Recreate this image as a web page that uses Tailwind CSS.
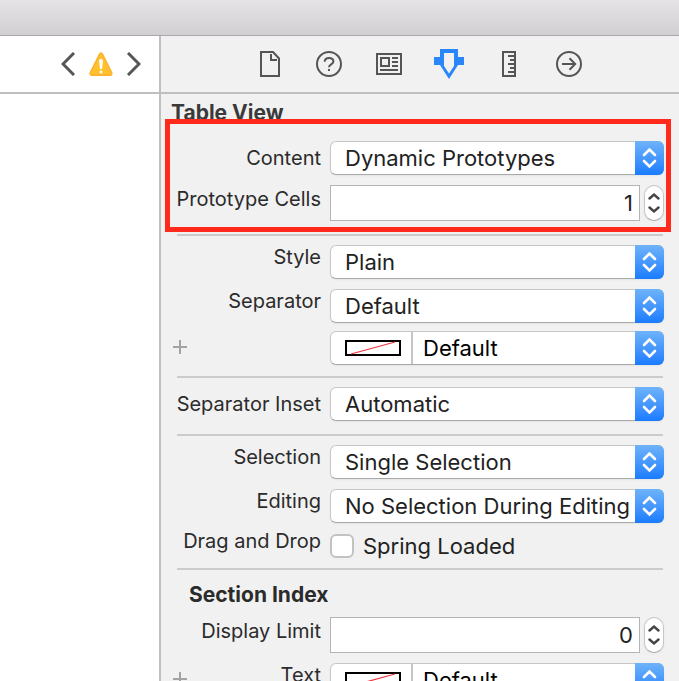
<!DOCTYPE html>
<html lang="en">
<head>
<meta charset="utf-8">
<meta name="viewport" content="width=device-width, initial-scale=1">
<title>Attributes Inspector</title>
<script src="https://cdn.jsdelivr.net/npm/@tailwindcss/browser@4"></script>
</head>
<body class="flex h-screen flex-col overflow-hidden bg-white font-['Inter','Liberation_Sans',sans-serif] text-[#2b2b2b]">

<!-- Shared symbols -->
<svg class="hidden" aria-hidden="true">
  <symbol id="popup-cap" viewBox="0 0 29 34">
    <path d="M9 14 14.5 8.5 20 14M9 20 14.5 25.5 20 20" fill="none" stroke="#fff" stroke-width="2.6" stroke-linecap="round"/>
  </symbol>
  <symbol id="plus" viewBox="0 0 14 14"><path d="M7 0V14M0 7H14" fill="none" stroke="#a3a3a3" stroke-width="2"/></symbol>
  <symbol id="up" viewBox="0 0 12 8"><path d="M1.5 6.5 6 2.5 10.5 6.5" fill="none" stroke="#444" stroke-width="2.4" stroke-linecap="round"/></symbol>
  <symbol id="down" viewBox="0 0 12 8"><path d="M1.5 1.5 6 5.5 10.5 1.5" fill="none" stroke="#444" stroke-width="2.4" stroke-linecap="round"/></symbol>
  <symbol id="no-color" viewBox="0 0 56 16"><rect x="1" y="1" width="54" height="14" fill="#fff" stroke="#000" stroke-width="2"/><path d="M6 14 50 2" stroke="#f5333f" stroke-width="1.2"/></symbol>
</svg>

<header class="h-9 shrink-0 border-b border-[#aaa8ab] bg-linear-to-b from-[#e5e3e6] to-[#d1cfd2]"></header>

<div class="flex min-h-0 flex-1">
  <main class="w-[161px] shrink-0 border-r-2 border-[#bfbfbf] bg-white">
    <nav class="flex h-[58px] items-center justify-end gap-3.5 border-b-2 border-[#bfbfbf] pr-[18px]" aria-label="Issues">
      <button type="button" aria-label="Previous issue"><svg class="h-6 w-3.5" viewBox="0 0 14 24"><path d="M13 1 2 12 13 23" fill="none" stroke="#555" stroke-width="3"/></svg></button>
      <button type="button" aria-label="Show warnings"><svg class="size-6" viewBox="0 0 24 24"><path d="M10.8 1.6Q12 .2 13.2 1.6L22.8 20.8Q23.2 23.2 21.2 23.3H2.8Q.8 23.200 1.2 20.800Z" fill="#ffc02e" stroke="#ffb02e" stroke-width="1.4" stroke-linejoin="round"/><path d="M10 8.5Q10 7 12 7T14 8.5L13 17H11Z" fill="#fff"/><circle cx="12" cy="20" r="1.5" fill="#fff"/></svg></button>
      <button type="button" aria-label="Next issue"><svg class="h-6 w-3.5" viewBox="0 0 14 24"><path d="M1 1 12 12 1 23" fill="none" stroke="#555" stroke-width="3"/></svg></button>
    </nav>
  </main>

  <aside class="min-w-0 flex-1 overflow-hidden bg-[#f1f1f1]">
    <nav class="flex h-[58px] items-center justify-center border-b-2 border-[#bfbfbf] text-[#555]" aria-label="Inspectors">
      <button type="button" class="flex w-15 justify-center" aria-label="File"><svg class="size-[30px]" viewBox="0 0 30 30" fill="none" stroke="currentColor" stroke-width="2"><path d="M6 3H18L24 9.5V27H6ZM16 5V11H22"/></svg></button>
      <button type="button" class="flex w-15 justify-center" aria-label="Quick Help"><svg class="size-[30px]" viewBox="0 0 30 30" fill="none" stroke="currentColor" stroke-width="2"><circle cx="14" cy="15" r="12"/><path d="M9.7 12.8C9.7 10.3 11.5 9 14 9S18.4 10.4 18.4 12.5C18.4 15.5 14 15.3 14 18.2M14 20V22"/></svg></button>
      <button type="button" class="flex w-15 justify-center" aria-label="Identity"><svg class="size-[30px]" viewBox="0 0 30 30" fill="none" stroke="currentColor" stroke-width="2"><path d="M2 5H26V25H2ZM6 9H14V17H6ZM17 9H23M17 13H23M17 17H23M5 21H23"/></svg></button>
      <button type="button" class="flex w-15 justify-center text-[#2a87fb]" aria-label="Attributes" aria-pressed="true"><svg class="size-[30px] overflow-visible" viewBox="0 0 30 30"><path fill="currentColor" fill-rule="evenodd" d="M5 0H23V8H29V16H23L14 30 5 16H-1V8H5ZM9 4V17L14 24.5 19 17V4Z"/></svg></button>
      <button type="button" class="flex w-15 justify-center" aria-label="Size"><svg class="size-[30px]" viewBox="0 0 30 30" fill="none" stroke="currentColor" stroke-width="2"><path d="M8 3H20V27H8ZM13 7H20M15 11H20M13 15H20M15 19H20M13 23H20"/></svg></button>
      <button type="button" class="flex w-15 justify-center" aria-label="Connections"><svg class="size-[30px]" viewBox="0 0 30 30" fill="none" stroke="currentColor" stroke-width="2"><circle cx="14" cy="15" r="12"/><path d="M7 15H20M14.5 9.3 20.2 15 14.5 20.7"/></svg></button>
    </nav>

    <form class="flex flex-col">
      <h2 class="mt-[7px] pl-2.5 text-[21px] leading-6 font-bold text-[#3a3a3a]">Table View</h2>

      <div class="relative mt-4 flex flex-col gap-2.5">
        <div class="grid grid-cols-[160px_minmax(0,1fr)] gap-[9px] pr-[15px]">
          <label for="content" class="self-center text-right text-xl leading-6">Content</label>
          <div class="relative h-[34px]">
            <select id="content" class="block size-full appearance-none rounded-md border border-[#c6c6c6] border-b-[#a9a9a9] bg-white pr-[29px] pl-3.5 text-[22px] leading-8 text-[#222] shadow-xs"><option>Dynamic Prototypes</option><option>Static Cells</option></select>
            <svg class="pointer-events-none absolute top-0 right-0 h-[34px] w-[29px] rounded-r-md bg-linear-to-b from-[#6eb3f9] to-[#187bfe]"><use href="#popup-cap"/></svg>
          </div>
        </div>
        <div class="grid grid-cols-[160px_minmax(0,1fr)] gap-[9px] pr-[15px]">
          <label for="cells" class="mt-0.5 text-right text-xl leading-6">Prototype Cells</label>
          <div class="flex h-9 gap-1">
            <input id="cells" value="1" inputmode="numeric" class="min-w-0 flex-1 border border-[#b4b4b4] bg-white pr-1.5 text-right text-[22px] leading-8 text-[#222]">
            <div class="flex w-5 flex-col items-center justify-between rounded-full border border-[#c6c6c6] border-b-[#a9a9a9] bg-white py-1.5 shadow-xs">
              <button type="button" aria-label="Increase prototype cells"><svg class="block h-2 w-3"><use href="#up"/></svg></button>
              <button type="button" aria-label="Decrease prototype cells"><svg class="block h-2 w-3"><use href="#down"/></svg></button>
            </div>
          </div>
        </div>
        <div class="pointer-events-none absolute -top-[22px] right-2 -bottom-[11px] left-1 z-10 border-5 border-[#ff2a1c]"></div>
      </div>

      <hr class="mx-4 mt-[13px] border-t-2 border-[#cbcbcb]">

      <div class="mt-[9px] grid grid-cols-[160px_minmax(0,1fr)] gap-[9px] pr-[15px]">
        <label for="style" class="text-right text-xl leading-6">Style</label>
        <div class="relative h-[34px]">
          <select id="style" class="block size-full appearance-none rounded-md border border-[#c6c6c6] border-b-[#a9a9a9] bg-white pr-[29px] pl-3.5 text-[22px] leading-8 text-[#222] shadow-xs"><option>Plain</option><option>Grouped</option></select>
          <svg class="pointer-events-none absolute top-0 right-0 h-[34px] w-[29px] rounded-r-md bg-linear-to-b from-[#6eb3f9] to-[#187bfe]"><use href="#popup-cap"/></svg>
        </div>
      </div>
      <div class="mt-2.5 grid grid-cols-[160px_minmax(0,1fr)] gap-[9px] pr-[15px]">
        <label for="separator" class="text-right text-xl leading-6">Separator</label>
        <div class="relative h-[34px]">
          <select id="separator" class="block size-full appearance-none rounded-md border border-[#c6c6c6] border-b-[#a9a9a9] bg-white pr-[29px] pl-3.5 text-[22px] leading-8 text-[#222] shadow-xs"><option>Default</option><option>Single Line</option><option>None</option></select>
          <svg class="pointer-events-none absolute top-0 right-0 h-[34px] w-[29px] rounded-r-md bg-linear-to-b from-[#6eb3f9] to-[#187bfe]"><use href="#popup-cap"/></svg>
        </div>
      </div>
      <div class="mt-2 grid grid-cols-[160px_minmax(0,1fr)] gap-[9px] pr-[15px]">
        <div class="flex items-center pb-0.5 pl-3">
          <button type="button" aria-label="Add separator color variation"><svg class="size-3.5"><use href="#plus"/></svg></button>
        </div>
        <div class="relative flex h-[34px] rounded-md border border-[#c6c6c6] border-b-[#a9a9a9] bg-white shadow-xs">
          <button type="button" aria-label="Choose separator color" class="flex w-[82px] shrink-0 items-center border-r-2 border-[#c6c6c6] pl-3.5"><svg class="h-4 w-14"><use href="#no-color"/></svg></button>
          <select aria-label="Separator color" class="min-w-0 flex-1 appearance-none bg-transparent pr-[29px] pl-2.5 text-[22px] leading-8 text-black"><option>Default</option></select>
          <svg class="pointer-events-none absolute -top-px -right-px h-[34px] w-[29px] rounded-r-md bg-linear-to-b from-[#6eb3f9] to-[#187bfe]"><use href="#popup-cap"/></svg>
        </div>
      </div>

      <hr class="mx-4 mt-[11px] border-t-2 border-[#cbcbcb]">

      <div class="mt-[9px] grid grid-cols-[160px_minmax(0,1fr)] gap-[9px] pr-[15px]">
        <label for="inset" class="self-center text-right text-xl leading-6">Separator Inset</label>
        <div class="relative h-[34px]">
          <select id="inset" class="block size-full appearance-none rounded-md border border-[#c6c6c6] border-b-[#a9a9a9] bg-white pr-[29px] pl-3.5 text-[22px] leading-8 text-[#222] shadow-xs"><option>Automatic</option><option>Custom</option></select>
          <svg class="pointer-events-none absolute top-0 right-0 h-[34px] w-[29px] rounded-r-md bg-linear-to-b from-[#6eb3f9] to-[#187bfe]"><use href="#popup-cap"/></svg>
        </div>
      </div>

      <hr class="mx-4 mt-[13px] border-t-2 border-[#cbcbcb]">

      <div class="mt-[9px] grid grid-cols-[160px_minmax(0,1fr)] gap-[9px] pr-[15px]">
        <label for="selection" class="text-right text-xl leading-6">Selection</label>
        <div class="relative h-[34px]">
          <select id="selection" class="block size-full appearance-none rounded-md border border-[#c6c6c6] border-b-[#a9a9a9] bg-white pr-[29px] pl-3.5 text-[22px] leading-8 text-[#222] shadow-xs"><option>Single Selection</option><option>Multiple Selection</option></select>
          <svg class="pointer-events-none absolute top-0 right-0 h-[34px] w-[29px] rounded-r-md bg-linear-to-b from-[#6eb3f9] to-[#187bfe]"><use href="#popup-cap"/></svg>
        </div>
      </div>
      <div class="mt-2.5 grid grid-cols-[160px_minmax(0,1fr)] gap-[9px] pr-[15px]">
        <label for="editing" class="text-right text-xl leading-6">Editing</label>
        <div class="relative h-[34px]">
          <select id="editing" class="block size-full appearance-none rounded-md border border-[#c6c6c6] border-b-[#a9a9a9] bg-white pr-[29px] pl-3.5 text-[22px] leading-8 text-[#222] shadow-xs"><option>No Selection During Editing</option></select>
          <svg class="pointer-events-none absolute top-0 right-0 h-[34px] w-[29px] rounded-r-md bg-linear-to-b from-[#6eb3f9] to-[#187bfe]"><use href="#popup-cap"/></svg>
        </div>
      </div>
      <div class="mt-1.5 grid grid-cols-[160px_minmax(0,1fr)] gap-[9px] pr-[15px]">
        <span class="text-right text-xl leading-6">Drag and Drop</span>
        <label class="flex h-[34px] items-center gap-[9px] text-[22px] leading-8 text-[#222]">
          <input type="checkbox" class="size-6 appearance-none rounded-md border-2 border-[#c2c2c2] bg-white checked:bg-[#187bfe]">
          Spring Loaded
        </label>
      </div>

      <hr class="mx-4 mt-[5px] border-t-2 border-[#cbcbcb]">

      <h3 class="mt-[13px] pl-7 text-[21px] leading-6 font-bold">Section Index</h3>
      <div class="mt-2.5 grid grid-cols-[160px_minmax(0,1fr)] gap-[9px] pr-[15px]">
        <label for="limit" class="mt-0.5 text-right text-xl leading-6">Display Limit</label>
        <div class="flex h-9 gap-1">
          <input id="limit" value="0" inputmode="numeric" class="min-w-0 flex-1 border border-[#b4b4b4] bg-white pr-1.5 text-right text-[22px] leading-8 text-[#222]">
          <div class="flex w-5 flex-col items-center justify-between rounded-full border border-[#c6c6c6] border-b-[#a9a9a9] bg-white py-1.5 shadow-xs">
            <button type="button" aria-label="Increase display limit"><svg class="block h-2 w-3"><use href="#up"/></svg></button>
            <button type="button" aria-label="Decrease display limit"><svg class="block h-2 w-3"><use href="#down"/></svg></button>
          </div>
        </div>
      </div>
      <div class="mt-2.5 grid grid-cols-[160px_minmax(0,1fr)] gap-[9px] pr-[15px]">
        <div class="flex items-start justify-between pl-3">
          <button type="button" class="self-center pb-0.5" aria-label="Add text color variation"><svg class="size-3.5"><use href="#plus"/></svg></button>
          <label for="text-color" class="text-xl leading-6">Text</label>
        </div>
        <div class="relative flex h-[34px] rounded-md border border-[#c6c6c6] border-b-[#a9a9a9] bg-white shadow-xs">
          <button type="button" aria-label="Choose text color" class="flex w-[82px] shrink-0 items-center border-r-2 border-[#c6c6c6] pl-3.5"><svg class="h-4 w-14"><use href="#no-color"/></svg></button>
          <select id="text-color" class="min-w-0 flex-1 appearance-none bg-transparent pr-[29px] pl-2.5 text-[22px] leading-8 text-black"><option>Default</option></select>
          <svg class="pointer-events-none absolute -top-px -right-px h-[34px] w-[29px] rounded-r-md bg-linear-to-b from-[#6eb3f9] to-[#187bfe]"><use href="#popup-cap"/></svg>
        </div>
      </div>
    </form>
  </aside>
</div>
</body>
</html>
